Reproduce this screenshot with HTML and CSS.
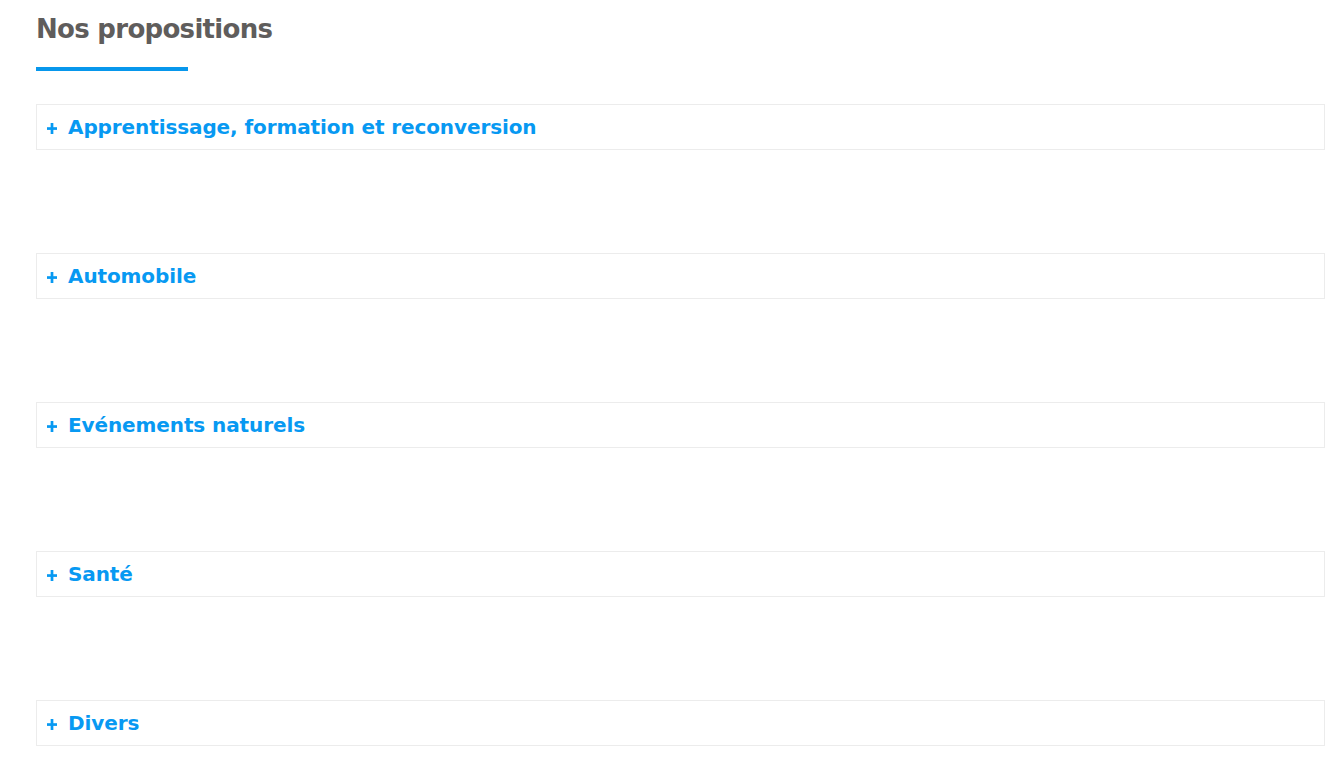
FILE: index.html
```html
<!DOCTYPE html>
<html>
    <head>
        <title>Nos propositions</title>
        <link rel="stylesheet" href="styles.css">
    </head>
    <body>
        <div class="main">
            <h2 class="section-title">Nos propositions</h2>
            <div class="title-bar"></div>

            <!-- Accordion items -->
            <div class="accordion">
                <div class="item">
                    <svg class="plus" width="10" height="11" viewBox="0 0 10 11"><rect x="0" y="4.2" width="10" height="2.7" /><rect x="3.65" y="0" width="2.7" height="11" /></svg>
                    <span class="label">Apprentissage, formation et reconversion</span>
                </div>
                <div class="item">
                    <svg class="plus" width="10" height="11" viewBox="0 0 10 11"><rect x="0" y="4.2" width="10" height="2.7" /><rect x="3.65" y="0" width="2.7" height="11" /></svg>
                    <span class="label">Automobile</span>
                </div>
                <div class="item">
                    <svg class="plus" width="10" height="11" viewBox="0 0 10 11"><rect x="0" y="4.2" width="10" height="2.7" /><rect x="3.65" y="0" width="2.7" height="11" /></svg>
                    <span class="label">Evénements naturels</span>
                </div>
                <div class="item">
                    <svg class="plus" width="10" height="11" viewBox="0 0 10 11"><rect x="0" y="4.2" width="10" height="2.7" /><rect x="3.65" y="0" width="2.7" height="11" /></svg>
                    <span class="label">Santé</span>
                </div>
                <div class="item">
                    <svg class="plus" width="10" height="11" viewBox="0 0 10 11"><rect x="0" y="4.2" width="10" height="2.7" /><rect x="3.65" y="0" width="2.7" height="11" /></svg>
                    <span class="label">Divers</span>
                </div>
            </div>
        </div>
    </body>
</html>
```
FILE: styles.css
```css
body {
    margin: 0;
    background-color: #ffffff;
    font-family: 'DejaVu Sans', sans-serif;
}
.main {
    padding-left: 36px;
    padding-right: 19px;
}
.section-title {
    margin: 0;
    padding-top: 13px;
    font-size: 26px;
    line-height: 32px;
    font-weight: 700;
    letter-spacing: -0.7px;
    color: #5f5d5c;
}
.title-bar {
    width: 152px;
    height: 4px;
    margin-top: 22px;
    background-color: #0797ec;
}
.accordion {
    display: flex;
    flex-direction: column;
    gap: 103px;
    margin-top: 33px;
}
.item {
    display: flex;
    align-items: center;
    height: 44px;
    padding-left: 10px;
    border: 1px solid #ececec;
    color: #0799f2;
}
.plus {
    fill: #0799f2;
    margin-top: 3px;
    margin-right: 11px;
    flex-shrink: 0;
}
.label {
    font-size: 20px;
    font-weight: 700;
    letter-spacing: -0.1px;
}
```
